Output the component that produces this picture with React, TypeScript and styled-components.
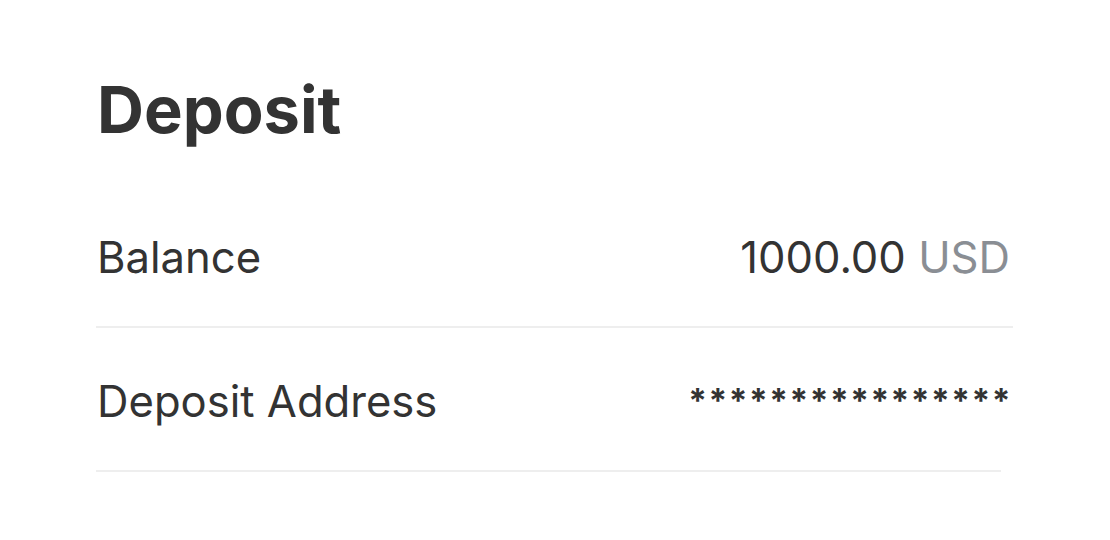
import React from "react";
import styled, { createGlobalStyle } from "styled-components";

const GlobalStyle = createGlobalStyle`
  body {
    margin: 0;
    background: #fff;
    font-family: Inter, "Noto Sans", sans-serif;
    color: #333;
  }
`;

const Page = styled.div`
  padding: 70px 0 0 96px;
`;

const Title = styled.h1`
  margin: 0 0 34px 1px;
  font-size: 65px;
  line-height: 80px;
  font-weight: 700;
  color: #333;
`;

const Row = styled.div<{ $width: number }>`
  display: flex;
  align-items: center;
  justify-content: space-between;
  width: ${({ $width }) => $width}px;
  height: 138px;
  padding-top: 4px;
  border-bottom: 2px solid #eeeeee;
  font-size: 43.6px;
`;

const Label = styled.span`
  padding-left: 1px;
`;

const Value = styled.span`
  padding-right: 3px;
`;

const Currency = styled.span`
  color: #8a8e94;
`;

const Masked = styled.span`
  margin-right: -11px;
  letter-spacing: 1.5px;
  font-size: 33.5px;
  font-weight: 700;
`;

export default function App() {
  return (
    <>
      <GlobalStyle />
      <Page>
        <Title>Deposit</Title>
        <Row $width={917}>
          <Label>Balance</Label>
          <Value>
            1000.00 <Currency>USD</Currency>
          </Value>
        </Row>
        <Row $width={905}>
          <Label>Deposit Address</Label>
          <Masked>****************</Masked>
        </Row>
      </Page>
    </>
  );
}
